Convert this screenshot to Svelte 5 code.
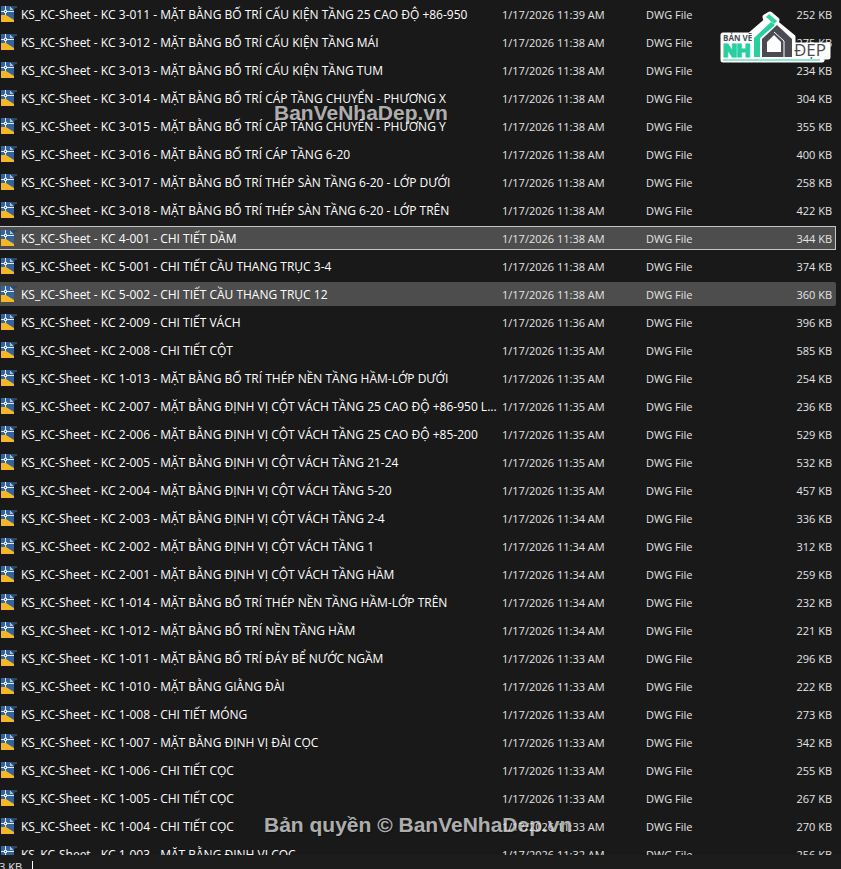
<script>
  const rows = [
    ['3-011 - MẶT BẰNG BỐ TRÍ CẤU KIỆN TẦNG 25 CAO ĐỘ +86-950', '11:39', 252],
    ['3-012 - MẶT BẰNG BỐ TRÍ CẤU KIỆN TẦNG MÁI', '11:38', 275],
    ['3-013 - MẶT BẰNG BỐ TRÍ CẤU KIỆN TẦNG TUM', '11:38', 234],
    ['3-014 - MẶT BẰNG BỐ TRÍ CÁP TẦNG CHUYỂN - PHƯƠNG X', '11:38', 304],
    ['3-015 - MẶT BẰNG BỐ TRÍ CÁP TẦNG CHUYỂN - PHƯƠNG Y', '11:38', 355],
    ['3-016 - MẶT BẰNG BỐ TRÍ CÁP TẦNG 6-20', '11:38', 400],
    ['3-017 - MẶT BẰNG BỐ TRÍ THÉP SÀN TẦNG 6-20 - LỚP DƯỚI', '11:38', 258],
    ['3-018 - MẶT BẰNG BỐ TRÍ THÉP SÀN TẦNG 6-20 - LỚP TRÊN', '11:38', 422],
    ['4-001 - CHI TIẾT DẦM', '11:38', 344, 'focused'],
    ['5-001 - CHI TIẾT CẦU THANG TRỤC 3-4', '11:38', 374],
    ['5-002 - CHI TIẾT CẦU THANG TRỤC 12', '11:38', 360, 'hovered'],
    ['2-009 - CHI TIẾT VÁCH', '11:36', 396],
    ['2-008 - CHI TIẾT CỘT', '11:35', 585],
    ['1-013 - MẶT BẰNG BỐ TRÍ THÉP NỀN TẦNG HẦM-LỚP DƯỚI', '11:35', 254],
    ['2-007 - MẶT BẰNG ĐỊNH VỊ CỘT VÁCH TẦNG 25 CAO ĐỘ +86-950 L...', '11:35', 236],
    ['2-006 - MẶT BẰNG ĐỊNH VỊ CỘT VÁCH TẦNG 25 CAO ĐỘ +85-200', '11:35', 529],
    ['2-005 - MẶT BẰNG ĐỊNH VỊ CỘT VÁCH TẦNG 21-24', '11:35', 532],
    ['2-004 - MẶT BẰNG ĐỊNH VỊ CỘT VÁCH TẦNG 5-20', '11:35', 457],
    ['2-003 - MẶT BẰNG ĐỊNH VỊ CỘT VÁCH TẦNG 2-4', '11:34', 336],
    ['2-002 - MẶT BẰNG ĐỊNH VỊ CỘT VÁCH TẦNG 1', '11:34', 312],
    ['2-001 - MẶT BẰNG ĐỊNH VỊ CỘT VÁCH TẦNG HẦM', '11:34', 259],
    ['1-014 - MẶT BẰNG BỐ TRÍ THÉP NỀN TẦNG HẦM-LỚP TRÊN', '11:34', 232],
    ['1-012 - MẶT BẰNG BỐ TRÍ NỀN TẦNG HẦM', '11:34', 221],
    ['1-011 - MẶT BẰNG BỐ TRÍ ĐÁY BỂ NƯỚC NGẦM', '11:33', 296],
    ['1-010 - MẶT BẰNG GIẰNG ĐÀI', '11:33', 222],
    ['1-008 - CHI TIẾT MÓNG', '11:33', 273],
    ['1-007 - MẶT BẰNG ĐỊNH VỊ ĐÀI CỌC', '11:33', 342],
    ['1-006 - CHI TIẾT CỌC', '11:33', 255],
    ['1-005 - CHI TIẾT CỌC', '11:33', 267],
    ['1-004 - CHI TIẾT CỌC', '11:33', 270],
    ['1-003 - MẶT BẰNG ĐỊNH VỊ CỌC', '11:32', 256]
  ].map(([title, time, size, state = '']) => ({ title, time, size, state }));
</script>

<div class="window">
  <main class="list">
    <table>
      <colgroup>
        <col />
        <col class="col-date" />
        <col class="col-type" />
        <col class="col-size" />
      </colgroup>
      <tbody>
        {#each rows as row (row.title)}
          <tr class={row.state}>
            <td class="name">
              <div class="file">
                <svg width="17" height="16" viewBox="0 0 17 16" shape-rendering="crispEdges" aria-hidden="true">
                  <path d="M1 0H14V16H1Z" fill="#34649b" />
                  <path d="M1 9H6L14 14V16H1Z" fill="#f6b727" shape-rendering="auto" />
                  <path d="M10 1V4H14Z" fill="#a9bdd0" />
                  <path d="M11 0H17V2H15V3H13Z" fill="#294866" />
                  <path d="M1 5H4V6H1ZM7 5H14V6H7ZM5 0H6V4H5ZM5 7H6V9H5Z" fill="#dce9f5" />
                  <path d="M4 4H7V7H4ZM5 5V6H6V5Z" fill="#dce9f5" fill-rule="evenodd" />
                </svg>
                <span>KS_KC-Sheet - KC {row.title}</span>
              </div>
            </td>
            <td class="detail">1/17/2026 {row.time} AM</td>
            <td class="detail">DWG File</td>
            <td class="detail size">{row.size} KB</td>
          </tr>
        {/each}
      </tbody>
    </table>
  </main>
  <footer><span>3 KB</span><i></i></footer>

  <div class="mark top">BanVeNhaDep.vn</div>
  <div class="mark bottom">Bản quyền © BanVeNhaDep.vn</div>

  <svg class="logo" width="114" height="56" viewBox="0 0 114 56" role="img" aria-label="Bản Vẽ Nhà Đẹp">
    <path d="M4 25H31L47 11L46 7L51 4L58 10L57 13L74 27V35H109V47H103V50H4Z" fill="#fff" stroke="#fff" stroke-width="5" stroke-linejoin="round" />
    <text x="4" y="31" class="small">BẢN VẼ</text>
    <text x="4" y="47" class="teal">NH</text>
    <path d="M35 47V28L52 12L56 15L41 28V47Z" fill="#27cfa0" />
    <path d="M47 7L50 4L58 11L55 14Z" fill="#2fd59b" />
    <path d="M43 47V29L58 15L73 29V47Z" fill="#4a4b52" />
    <path d="M48 42V32L55 25L62 32V42Z" fill="#fff" />
    <path d="M55 22L65 31V47" fill="none" stroke="#fff" />
    <text x="75" y="46" class="thin">ĐẸP</text>
    <path d="M4 50H101" stroke="#27cfa0" stroke-width="1" />
  </svg>
</div>

<style>
  :global(body) {
    margin: 0;
    background: #191919;
  }
  .window {
    position: relative;
    display: flex;
    flex-direction: column;
    height: 100vh;
    overflow: hidden;
    background: #191919;
    color: #e4e4e4;
    font: 12px/16px "Open Sans", "Noto Sans", sans-serif;
  }
  .list {
    flex: 1;
    min-height: 0;
    overflow: hidden;
    padding-right: 5px;
  }
  table {
    width: 100%;
    margin-top: -2px;
    table-layout: fixed;
    border-collapse: separate;
    border-spacing: 0 4px;
  }
  .col-date { width: 144px; }
  .col-type { width: 100px; }
  .col-size { width: 96px; }
  td {
    box-sizing: border-box;
    height: 24px;
    padding: 2px 0 0 6px;
    white-space: nowrap;
  }
  .detail { font-size: 11px; }
  .name {
    padding: 0;
    color: #fff;
  }
  .file {
    display: flex;
    align-items: center;
    gap: 4px;
  }
  .file svg { flex: none; }
  .file span { padding-top: 2px; }
  td.size {
    padding-right: 4px;
    text-align: right;
  }
  .hovered td,
  .focused td { background: #4d4d4d; }
  .hovered td:last-child { border-radius: 0 2px 2px 0; }
  .focused td {
    box-shadow: inset 0 1px #c4c4c4, inset 0 -1px #c4c4c4;
  }
  .focused td:last-child {
    box-shadow: inset 0 1px #c4c4c4, inset 0 -1px #c4c4c4, inset -1px 0 #c4c4c4;
  }
  footer {
    display: flex;
    gap: 10px;
    height: 14px;
    overflow: hidden;
    padding-top: 4px;
    box-sizing: border-box;
    background: #1c1c1c;
  }
  footer span {
    margin-left: -1px;
    font-size: 11px;
  }
  footer i {
    width: 1px;
    height: 10px;
    margin-top: 2px;
    background: #fff;
  }
  .mark {
    position: absolute;
    color: rgba(255, 255, 255, 0.68);
    font: bold 21px/24px "Liberation Sans", Arial, sans-serif;
    text-shadow: 1px 1px 1px rgba(0, 0, 0, 0.4);
    white-space: nowrap;
  }
  .top { left: 274px; top: 101px; }
  .bottom { left: 264px; top: 813px; }
  .logo {
    position: absolute;
    top: 10px;
    right: 8px;
  }
  .small { font: bold 8px "Open Sans", sans-serif; fill: #4a4b52; }
  .teal { font: 900 18px Inter, sans-serif; fill: #27cfa0; stroke: #27cfa0; stroke-width: 1px; }
  .thin { font: 17px "Open Sans", sans-serif; fill: #4a4b52; }
</style>
